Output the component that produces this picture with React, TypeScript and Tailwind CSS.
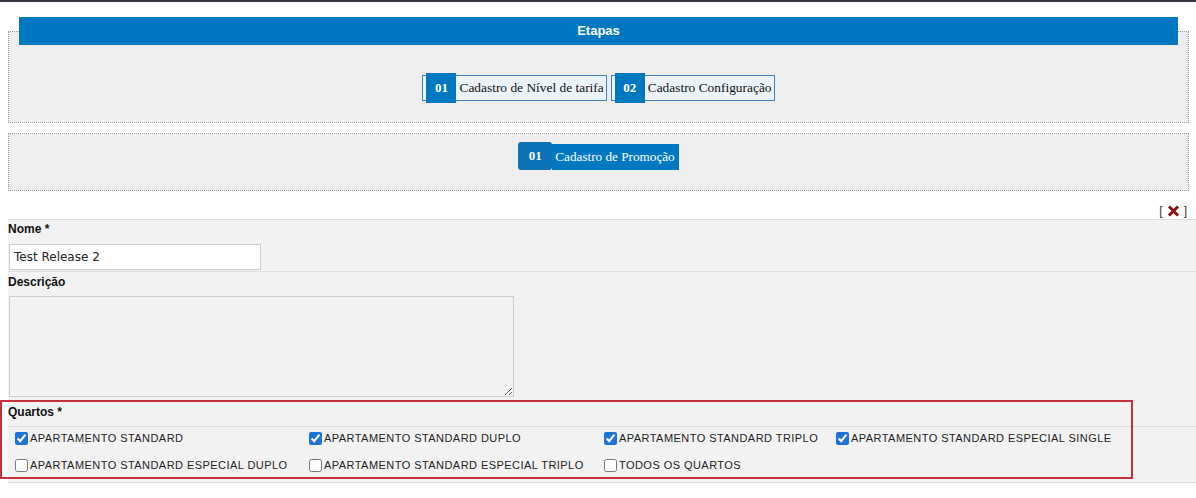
import React from "react";

const rooms: { label: string; checked: boolean }[][] = [
  [
    { label: "APARTAMENTO STANDARD", checked: true },
    { label: "APARTAMENTO STANDARD DUPLO", checked: true },
    { label: "APARTAMENTO STANDARD TRIPLO", checked: true },
    { label: "APARTAMENTO STANDARD ESPECIAL SINGLE", checked: true },
  ],
  [
    { label: "APARTAMENTO STANDARD ESPECIAL DUPLO", checked: false },
    { label: "APARTAMENTO STANDARD ESPECIAL TRIPLO", checked: false },
    { label: "TODOS OS QUARTOS", checked: false },
  ],
];

function Step({ n, label }: { n: string; label: string }) {
  return (
    <div className="flex h-[26px] items-center border border-[#3f7fb5] bg-[#edf4fa] pl-[3px] pr-[2px]">
      <div className="flex h-[30px] w-[30px] items-center justify-center bg-[#0078c1] font-['Liberation_Serif'] text-[13px] font-bold text-white">
        {n}
      </div>
      <span className="ml-[3px] font-['Liberation_Serif'] text-[13.4px] leading-none text-[#111]">
        {label}
      </span>
    </div>
  );
}

export default function App() {
  return (
    <div className="relative h-[498px] w-[1196px] overflow-hidden bg-white font-['Liberation_Sans',sans-serif]">
      <div className="h-[2px] bg-[#343a40]" />

      {/* Etapas */}
      <div className="mt-[15px]">
        <div className="relative z-10 ml-[19px] flex h-[28px] w-[1159px] items-center justify-center bg-[#0078c1] text-[13px] font-bold text-white">
          Etapas
        </div>
        <div className="-mt-[14px] ml-[8px] flex h-[92px] w-[1181px] justify-center border border-dotted border-[#9a9a9a] bg-[#eeeeee] pt-[41px]">
          <div className="flex h-[30px] items-center gap-[4px]">
            <Step n="01" label="Cadastro de Nível de tarifa" />
            <Step n="02" label="Cadastro Configuração" />
          </div>
        </div>
      </div>

      {/* Promo */}
      <div className="ml-[8px] mt-[10px] flex h-[58px] w-[1181px] justify-center border border-dotted border-[#9a9a9a] bg-[#eeeeee] pt-[8px]">
        <div className="flex h-[28px] items-end">
          <div className="flex h-[28px] w-[34px] items-center justify-center rounded-[3px] bg-[#0a72b5] font-['Liberation_Serif'] text-[13px] font-bold text-white">
            01
          </div>
          <div className="flex h-[26px] items-center bg-[#0078c1] pl-[3px] pr-[4px] font-['Liberation_Serif'] text-[13.2px] text-white">
            Cadastro de Promoção
          </div>
        </div>
      </div>

      {/* close */}
      <div className="flex h-[28px] items-start justify-end pr-[9px] pt-[13px]">
        <div className="flex items-center gap-[4px] text-[12px] leading-[14px] text-[#333]">
          <span>[</span>
          <svg width="13" height="12" viewBox="0 0 13 12">
            <path d="M2 1.5 L11 10.5 M11 1.5 L2 10.5" stroke="#8a1414" strokeWidth="3" strokeLinecap="butt" />
          </svg>
          <span>]</span>
        </div>
      </div>

      {/* form */}
      <div className="ml-[8px] border-t border-[#dcdcdc] bg-[#f2f2f2]">
        <div className="border-b border-[#e0e0e0] pb-[1px] pt-[1px]">
          <div className="text-[12px] font-bold leading-[16px] text-[#111]">Nome *</div>
          <input
            readOnly
            value="Test Release 2"
            className="ml-[1px] mt-[7px] block h-[26px] w-[252px] border border-[#cccccc] bg-white px-[4px] font-['DejaVu_Sans'] text-[12px] text-[#222] outline-none"
          />
        </div>
        <div className="pb-[3px] pt-[2px]">
          <div className="text-[12px] font-bold leading-[16px] text-[#111]">Descrição</div>
          <textarea
            readOnly
            className="ml-[1px] mt-[6px] block h-[101px] w-[505px] border border-[#cccccc] bg-[#f3f3f3] outline-none"
          />
        </div>
        <div className="border-b border-[#dcdcdc] pb-[10px] pt-[4px]">
          <div className="border-b border-[#dcdcdc] pb-[6px] text-[12px] font-bold leading-[16px] text-[#111]">
            Quartos *
          </div>
          <div className="grid grid-cols-[294px_295px_232px_auto] gap-y-[13px] pl-[7px] pt-[4px]">
            {rooms.map((row, ri) =>
              row.map((r, ci) => (
                <label
                  key={`${ri}-${ci}`}
                  className="flex h-[14px] items-center gap-[2px] text-[11px] tracking-[0.45px] text-[#222]"
                >
                  <input
                    type="checkbox"
                    defaultChecked={r.checked}
                    className="m-0 h-[13px] w-[13px] accent-[#1e74d6]"
                  />
                  <span>{r.label}</span>
                </label>
              ))
            )}
          </div>
        </div>
      </div>

      {/* red highlight annotation */}
      <div className="pointer-events-none absolute left-0 top-[400px] h-[79px] w-[1133px] border-2 border-[#c4313b]" />
    </div>
  );
}
